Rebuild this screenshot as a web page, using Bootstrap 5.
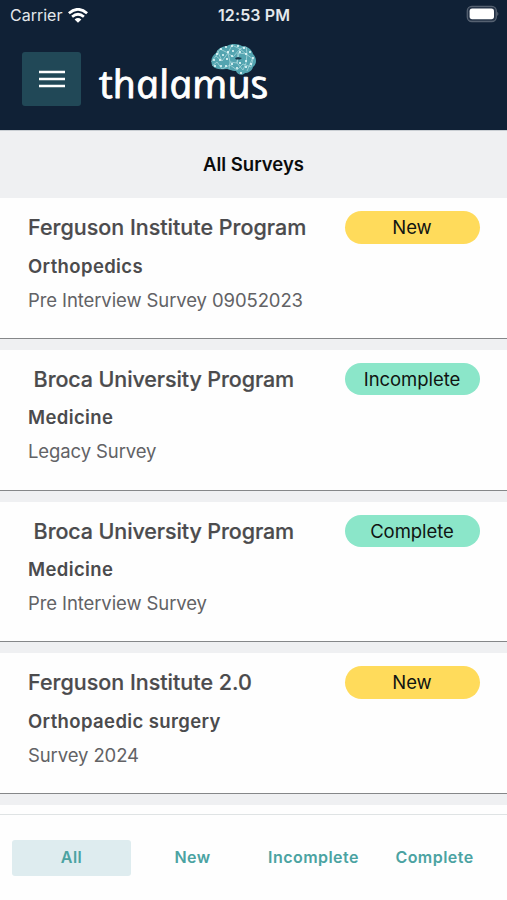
<!DOCTYPE html>
<html lang="en">
<head>
<meta charset="utf-8">
<meta name="viewport" content="width=device-width, initial-scale=1">
<title>Thalamus – All Surveys</title>
<link href="https://cdn.jsdelivr.net/npm/bootstrap@5.3.0/dist/css/bootstrap.min.css" rel="stylesheet">
<style>
body{font-family:Inter,"Liberation Sans",sans-serif;color:#4b4b4d;height:900px;overflow:hidden;background:#fefefe}
.topbar{background:#102136;height:130px}
.status{height:30px;font-size:16px;line-height:30px;color:#e4e8ec;padding:0 8px 0 10px}
.carrier{letter-spacing:0}
.wifi{margin-left:6px}
.clock{font-weight:600;letter-spacing:.1px;padding-left:1px}
.brand-row{padding:6px 0 0 22px}
.menu-btn{width:59px;height:54px;border-radius:3px;background:#214857;margin-top:16px}
.heading{height:68px;background:#eff0f2;color:#0b0b0c;font-size:18.5px;font-weight:600;line-height:66px;border-top:1px solid #c9ced3}
.survey{height:151.75px;border-bottom:11px solid #eff0f2;padding:13px 27px 0 28px}
.survey-line{border-bottom:1px solid #858789;margin:0 -27px 0 -28px;height:25.25px}
.survey-title{font-size:21.5px;font-weight:500;line-height:32px;-webkit-text-stroke:.2px;white-space:pre}
.title-snug{letter-spacing:-.11px}
.survey-dept{font-size:18.5px;font-weight:600;line-height:28px;margin-top:8px;letter-spacing:.38px}
.survey-name{font-size:18.5px;line-height:28px;margin-top:6px;color:#626265;letter-spacing:-.1px}
.state{width:135px;height:32.5px;line-height:32px;font-size:18.5px;color:#101412;letter-spacing:-.05px;padding-right:1px}
.state-new{background:#ffdb5b}
.state-done{background:#8be6c9}
.tabs{height:86px;background:#fefefe;border-top:1px solid #dfe3e4;padding:25px 13px 0 12px}
.tab{flex:0 0 119px;height:36px;line-height:35px;border-radius:3px;font-size:16px;font-weight:600;letter-spacing:.45px;color:#4ba3a2;text-decoration:none}
.tab-on{background:#deecef}
.logo{overflow:visible}
.logo-word{font:italic 500 39px "Open Sans","Noto Sans",sans-serif}
</style>
<script src="https://cdn.jsdelivr.net/npm/bootstrap@5.3.0/dist/js/bootstrap.bundle.min.js"></script>
</head>
<body class="d-flex flex-column">
<header class="topbar flex-shrink-0">
  <div class="status d-flex justify-content-between position-relative">
    <div class="d-flex align-items-center"><span class="carrier">Carrier</span>
      <svg class="wifi" width="20" height="15" viewBox="0 0 20 15" fill="none" stroke="#fff" stroke-width="2.7"><path d="M.9 5.3Q10-2.7 19.1 5.3M4.1 8.8Q10 3.7 15.9 8.8"/><path d="M6.6 11.4Q10 8.6 13.4 11.4L10 14.8Z" fill="#fff" stroke="none"/></svg>
    </div>
    <span class="clock position-absolute start-50 translate-middle-x text-nowrap">12:53 PM</span>
    <svg class="mt-1 pt-0" width="34" height="20" viewBox="0 0 34 20"><rect x="2.3" y="2.3" width="29" height="15.2" rx="4.5" fill="#263448" stroke="#556171" stroke-width="1.3"/><rect x="4.6" y="4.6" width="24.4" height="10.6" rx="2.6" fill="#fff"/><path d="M32.4 7.8q1.8 2.1 0 4.2z" fill="#687382"/></svg>
  </div>
  <div class="brand-row d-flex">
    <button class="menu-btn btn p-0 border-0 d-flex align-items-center justify-content-center" aria-label="Menu">
      <svg width="26" height="20" viewBox="0 0 26 20" stroke="#fff" stroke-width="2.5"><path d="M0 3.1h26M0 10h26M0 16.9h26"/></svg>
    </button>
    <svg width="190" height="90" viewBox="97 36 190 90" class="logo ms-3" role="img" aria-label="thalamus">
      <defs>
        <clipPath id="brain"><path d="M212 65C210 59 213 55 216 53C218 48 223 46 227 46C232 43 239 44 242 46C248 46 252 50 253 54C257 58 257 64 253 67C252 71 248 73 245 73C243 76 237 75 236 71C231 71 229 69 226 69C220 70 214 69 212 65Z"/></clipPath>
      </defs>
      <text transform="translate(101.5 97.8) skewX(12)" textLength="169" lengthAdjust="spacingAndGlyphs" class="logo-word" fill="#fff" stroke="#fff" stroke-width=".8" stroke-linejoin="round">thalamus</text>
      <g clip-path="url(#brain)">
        <rect x="209" y="43" width="49" height="34" fill="#53a4b0"/>
        <path d="M211 62l5-6 6 5 6-8 5 4 7-8 6 5 7 5-2 8-8-3-6 6-7-5-8 4-5-7-6 5M216 56l4-7 8 4 4-8 8 4 6-3 1 8M222 61l-5-11M228 53l2 9 7 1 1-10M237 63l6 7 3-7 1-9-9-1M230 62l-1 7M240 49l-3 14M253 57l-6 14" fill="none" stroke="#b3dce1" stroke-width=".7"/>
        <g fill="#eafcfd"><circle cx="214" cy="60" r="1"/><circle cx="217" cy="54" r="1.1"/><circle cx="221" cy="49" r="1"/><circle cx="226" cy="47" r="1"/><circle cx="232" cy="46" r="1"/><circle cx="238" cy="46" r="1"/><circle cx="244" cy="48" r="1.1"/><circle cx="250" cy="52" r="1"/><circle cx="228" cy="52" r="1.1"/><circle cx="223" cy="55" r="1"/><circle cx="233" cy="51" r="1"/><circle cx="240" cy="52" r="1"/><circle cx="246" cy="54" r="1"/><circle cx="253" cy="58" r="1"/><circle cx="232" cy="56" r="1"/><circle cx="220" cy="60" r="1.1"/><circle cx="227" cy="59" r="1.1"/><circle cx="215" cy="66" r="1.1"/><circle cx="221" cy="66" r="1"/><circle cx="226" cy="66" r="1"/><circle cx="232" cy="64" r="1.1"/><circle cx="237" cy="68" r="1"/><circle cx="240" cy="63" r="1.1"/><circle cx="246" cy="61" r="1"/><circle cx="251" cy="64" r="1.1"/><circle cx="246" cy="67" r="1.1"/><circle cx="241" cy="73" r="1.1"/></g>
        <path d="M235 58l3-1 4 1-2 1.5h-4z" fill="#17384c"/>
      </g>
    </svg>
  </div>
</header>
<div class="heading text-center flex-shrink-0">All Surveys</div>
<main class="flex-grow-1 overflow-hidden">
  <article class="survey"><div class="d-flex justify-content-between"><div class="survey-title">Ferguson Institute Program</div><div class="state state-new rounded-pill text-center">New</div></div><div class="survey-dept">Orthopedics</div><div class="survey-name">Pre Interview Survey 09052023</div><div class="survey-line"></div></article>
  <article class="survey"><div class="d-flex justify-content-between"><div class="survey-title title-snug"> Broca University Program</div><div class="state state-done rounded-pill text-center">Incomplete</div></div><div class="survey-dept">Medicine</div><div class="survey-name">Legacy Survey</div><div class="survey-line"></div></article>
  <article class="survey"><div class="d-flex justify-content-between"><div class="survey-title title-snug"> Broca University Program</div><div class="state state-done rounded-pill text-center">Complete</div></div><div class="survey-dept">Medicine</div><div class="survey-name">Pre Interview Survey</div><div class="survey-line"></div></article>
  <article class="survey"><div class="d-flex justify-content-between"><div class="survey-title">Ferguson Institute 2.0</div><div class="state state-new rounded-pill text-center">New</div></div><div class="survey-dept">Orthopaedic surgery</div><div class="survey-name">Survey 2024</div><div class="survey-line"></div></article>
</main>
<nav class="tabs d-flex justify-content-between flex-shrink-0 text-center">
  <a class="tab tab-on" href="#">All</a><a class="tab" href="#">New</a><a class="tab" href="#">Incomplete</a><a class="tab" href="#">Complete</a>
</nav>
</body>
</html>
